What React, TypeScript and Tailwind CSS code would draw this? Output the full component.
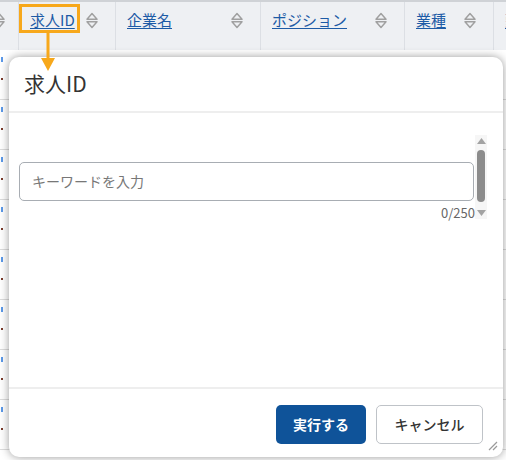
import React from "react";

const cols = [
  { label: "", w: "w-[18px]" },
  { label: "求人ID", w: "w-[97px]" },
  { label: "企業名", w: "w-[145px]" },
  { label: "ポジション", w: "w-[144px]" },
  { label: "業種", w: "w-[89px]" },
  { label: "勤", w: "w-[40px]" },
];

function SortIcon() {
  return (
    <svg width="12" height="17" viewBox="0 0 12 17" fill="none" className="shrink-0">
      <path d="M1 7.2 L6 1.6 L11 7.2 Z" stroke="#a0a0a0" strokeWidth="1.5" strokeLinejoin="round" />
      <path d="M1 9.8 L6 15.4 L11 9.8 Z" stroke="#a0a0a0" strokeWidth="1.5" strokeLinejoin="round" />
    </svg>
  );
}

function HeaderCell({ label, w, first }: { label: string; w: string; first?: boolean }) {
  if (first) {
    return (
      <div className={`${w} shrink-0 h-full flex items-start pt-[10px] overflow-hidden`}>
        <div className="-ml-[7px]">
          <SortIcon />
        </div>
      </div>
    );
  }
  return (
    <div className={`${w} shrink-0 h-full flex items-start pt-[7px] border-l border-[#dcdfe4] pl-[11px] pr-[17px]`}>
      <div className="flex w-full items-start justify-between">
        <span className="text-[15px] leading-[21px] text-[#1d5ba6] underline underline-offset-2 whitespace-nowrap">{label}</span>
        {label !== "勤" && (
          <div className="mt-[3px]">
            <SortIcon />
          </div>
        )}
      </div>
    </div>
  );
}

export default function App() {
  const rows = [0, 1, 2, 3, 4, 5, 6, 7];
  return (
    <div
      className="relative w-[506px] h-[460px] overflow-hidden bg-white"
      style={{ fontFamily: '"Noto Sans CJK JP", "Noto Sans", sans-serif' }}
    >
      {/* table behind */}
      <div className="flex h-[50px] border-t-2 border-[#cfd2d6] bg-[#eef0f3]">
        {cols.map((c, i) => (
          <HeaderCell key={i} label={c.label} w={c.w} first={i === 0} />
        ))}
      </div>
      <div className="flex flex-col">
        {rows.map((r) => (
          <div key={r} className="h-[50px] border-b border-[#dcdcdc] pl-[1px] pt-[7px] flex flex-col gap-[16px]">
            <span className="block w-[2px] h-[5px] bg-[#5b98e8]" />
            <span className="block w-[2px] h-[2px] bg-[#7a3a2a]" />
          </div>
        ))}
      </div>

      {/* highlight */}
      <div className="absolute left-[19px] top-[4px] w-[61px] h-[29px] border-[3px] border-[#f7a81b]" />
      <svg className="absolute left-[40px] top-[31px] z-20" width="16" height="42" viewBox="0 0 16 42">
        <rect x="6.5" y="0" width="3" height="28" fill="#f7a81b" />
        <path d="M1 27 L15 27 L8 40 Z" fill="#f7a81b" />
      </svg>

      {/* popover */}
      <div className="absolute left-[9px] top-[57px] w-[494px] h-[400px] rounded-[10px] bg-white shadow-[0_0_10px_rgba(0,0,0,0.4)] flex flex-col z-10">
        <div className="h-[56px] shrink-0 flex items-center pl-[15px] border-b-2 border-[#eeeeee]">
          <span className="text-[21px] text-[#333]">求人ID</span>
        </div>
        <div className="flex-1 flex pl-[10px] pr-[16px] pt-[22px]">
          <div className="flex-1 flex flex-col pt-[27px]">
            <div className="h-[39px] rounded-[5px] border border-[#a8adb3] flex items-center pl-[12px]">
              <span className="text-[14px] text-[#777]">キーワードを入力</span>
            </div>
            <div className="text-right text-[13px] text-[#666] leading-[18px] mt-[3px] -mr-[1px]">0/250</div>
          </div>
          <div className="w-[12px] ml-[1px] h-[84px] bg-[#f6f6f6] flex flex-col items-center pt-[3px]">
            <svg width="9" height="6" viewBox="0 0 9 6"><path d="M0 6 L4.5 0 L9 6 Z" fill="#a3a3a3" /></svg>
            <div className="w-[8px] h-[52px] rounded-full bg-[#8c8c8c] mt-[6px]" />
            <svg className="mt-[8px]" width="9" height="6" viewBox="0 0 9 6"><path d="M0 0 L9 0 L4.5 6 Z" fill="#a3a3a3" /></svg>
          </div>
        </div>
        <div className="h-[70px] shrink-0 border-t-2 border-[#eeeeee] flex justify-end items-start pt-[16px] pr-[20px] gap-[10px] relative">
          <button className="w-[90px] h-[39px] rounded-[5px] bg-[#0f5399] text-white text-[14px] font-bold">実行する</button>
          <button className="w-[107px] h-[39px] rounded-[5px] border border-[#bfc3c8] bg-white text-[#333] text-[14px] font-medium">キャンセル</button>
          <svg className="absolute right-[5px] bottom-[6px]" width="11" height="11" viewBox="0 0 11 11">
            <path d="M10 2 L2 10 M10 6 L6 10" stroke="#9a9a9a" strokeWidth="1.2" />
          </svg>
        </div>
      </div>
    </div>
  );
}
